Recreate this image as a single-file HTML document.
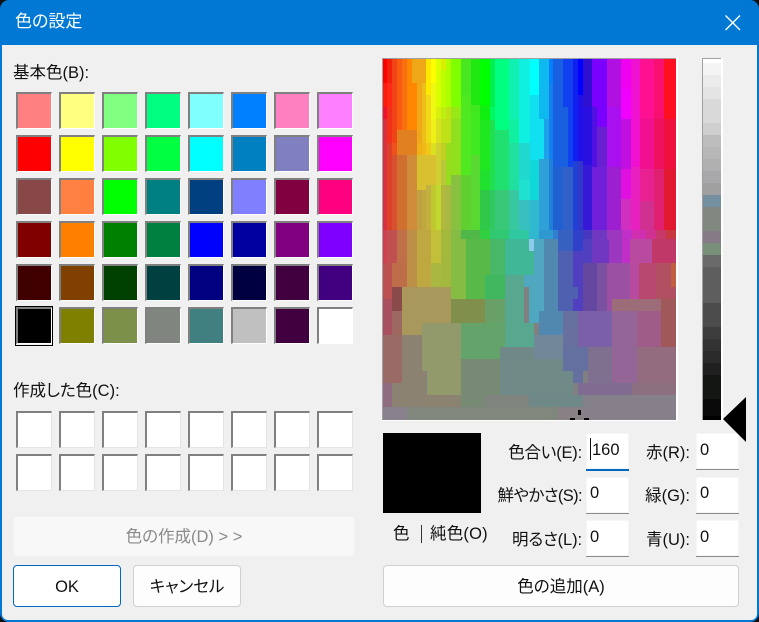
<!DOCTYPE html>
<html lang="ja"><head><meta charset="utf-8"><title>色の設定</title>
<style>
html,body{margin:0;padding:0;background:#111;}
body{width:759px;height:622px;position:relative;overflow:hidden;font-family:"Liberation Sans","Noto Sans CJK JP",sans-serif;font-size:16.5px;color:#111;font-feature-settings:"palt";}
#win{position:absolute;left:0;top:0;width:759px;height:622px;background:#0078d4;border-radius:9px;overflow:hidden;}
#body{position:absolute;left:2px;top:45px;width:755px;height:575px;background:#f0f0f0;border-radius:0 0 6px 6px;}
.t{position:absolute;white-space:nowrap;line-height:22px;}
.s{position:absolute;box-sizing:border-box;width:36px;height:37px;border-style:solid;border-width:2px 1px 1px 2px;border-color:#808080 #fff #fff #808080;}
.c{background:#fff;border-color:#808080 #e4e4e4 #e4e4e4 #808080;}
.in{position:absolute;box-sizing:border-box;width:43px;height:37px;background:#fff;border-bottom:1px solid #8a8a8a;box-shadow:0 0 0 1px #f6f6f6 inset;}
.b{position:absolute;box-sizing:border-box;background:#fdfdfd;border:1px solid #cfcfcf;border-radius:4px;text-align:center;line-height:42px;}
</style></head><body>
<div id="win"></div><div id="body"></div>
<div class="t" style="left:15px;top:11px;color:#fff;font-size:17px">色の設定</div>
<svg style="position:absolute;left:720px;top:10px" width="26" height="26"><path d="M5.5 5.5L20 20M20 5.5L5.5 20" stroke="#fff" stroke-width="1.4" fill="none"/></svg>

<div class="t" style="left:13px;top:62px">基本色(B):</div>
<div class="t" style="left:13px;top:380px">作成した色(C):</div>

<div class="s" style="left:16px;top:92px;background:#ff8080"></div><div class="s" style="left:59px;top:92px;background:#ffff80"></div><div class="s" style="left:102px;top:92px;background:#80ff80"></div><div class="s" style="left:145px;top:92px;background:#00ff80"></div><div class="s" style="left:188px;top:92px;background:#80ffff"></div><div class="s" style="left:231px;top:92px;background:#0080ff"></div><div class="s" style="left:274px;top:92px;background:#ff80c0"></div><div class="s" style="left:317px;top:92px;background:#ff80ff"></div>
<div class="s" style="left:16px;top:135px;background:#ff0000"></div><div class="s" style="left:59px;top:135px;background:#ffff00"></div><div class="s" style="left:102px;top:135px;background:#80ff00"></div><div class="s" style="left:145px;top:135px;background:#00ff40"></div><div class="s" style="left:188px;top:135px;background:#00ffff"></div><div class="s" style="left:231px;top:135px;background:#0080c0"></div><div class="s" style="left:274px;top:135px;background:#8080c0"></div><div class="s" style="left:317px;top:135px;background:#ff00ff"></div>
<div class="s" style="left:16px;top:178px;background:#884848"></div><div class="s" style="left:59px;top:178px;background:#ff8040"></div><div class="s" style="left:102px;top:178px;background:#00ff00"></div><div class="s" style="left:145px;top:178px;background:#008080"></div><div class="s" style="left:188px;top:178px;background:#004080"></div><div class="s" style="left:231px;top:178px;background:#8080ff"></div><div class="s" style="left:274px;top:178px;background:#800040"></div><div class="s" style="left:317px;top:178px;background:#ff0080"></div>
<div class="s" style="left:16px;top:221px;background:#800000"></div><div class="s" style="left:59px;top:221px;background:#ff8000"></div><div class="s" style="left:102px;top:221px;background:#008000"></div><div class="s" style="left:145px;top:221px;background:#008040"></div><div class="s" style="left:188px;top:221px;background:#0000ff"></div><div class="s" style="left:231px;top:221px;background:#0000a0"></div><div class="s" style="left:274px;top:221px;background:#800080"></div><div class="s" style="left:317px;top:221px;background:#8000ff"></div>
<div class="s" style="left:16px;top:264px;background:#400000"></div><div class="s" style="left:59px;top:264px;background:#804000"></div><div class="s" style="left:102px;top:264px;background:#004000"></div><div class="s" style="left:145px;top:264px;background:#004040"></div><div class="s" style="left:188px;top:264px;background:#000080"></div><div class="s" style="left:231px;top:264px;background:#000040"></div><div class="s" style="left:274px;top:264px;background:#400040"></div><div class="s" style="left:317px;top:264px;background:#400080"></div>
<div style="position:absolute;left:15px;top:306px;width:38px;height:40px;box-sizing:border-box;border:1px solid #000"></div>
<div class="s" style="left:16px;top:307px;background:#000"></div><div class="s" style="left:59px;top:307px;background:#808000"></div><div class="s" style="left:102px;top:307px;background:#7c904a"></div><div class="s" style="left:145px;top:307px;background:#808580"></div><div class="s" style="left:188px;top:307px;background:#408080"></div><div class="s" style="left:231px;top:307px;background:#c0c0c0"></div><div class="s" style="left:274px;top:307px;background:#400040"></div><div class="s" style="left:317px;top:307px;background:#fff"></div>

<div class="s c" style="left:16px;top:411px"></div><div class="s c" style="left:59px;top:411px"></div><div class="s c" style="left:102px;top:411px"></div><div class="s c" style="left:145px;top:411px"></div><div class="s c" style="left:188px;top:411px"></div><div class="s c" style="left:231px;top:411px"></div><div class="s c" style="left:274px;top:411px"></div><div class="s c" style="left:317px;top:411px"></div>
<div class="s c" style="left:16px;top:454px"></div><div class="s c" style="left:59px;top:454px"></div><div class="s c" style="left:102px;top:454px"></div><div class="s c" style="left:145px;top:454px"></div><div class="s c" style="left:188px;top:454px"></div><div class="s c" style="left:231px;top:454px"></div><div class="s c" style="left:274px;top:454px"></div><div class="s c" style="left:317px;top:454px"></div>

<div class="b" style="left:13px;top:516px;width:342px;height:41px;line-height:41px;background:#f8f8f8;border-color:#f2f2f2;border-radius:5px;color:#8a8a8a">色の作成(D) &gt; &gt;</div>
<div class="b" style="left:13px;top:565px;width:108px;height:42px;border-color:#0067c0;background:#fff">OK</div>
<div class="b" style="left:133px;top:565px;width:108px;height:42px">キャンセル</div>
<div class="b" style="left:383px;top:565px;width:356px;height:42px">色の追加(A)</div>

<!-- spectrum frame -->
<div style="position:absolute;left:382px;top:58px;width:295px;height:363px;background:#a0a0a0"></div>
<div style="position:absolute;left:676px;top:58px;width:2px;height:363px;background:#fff"></div>
<div style="position:absolute;left:382px;top:420px;width:296px;height:1px;background:#fff"></div>
<svg style="position:absolute;left:0;top:0" width="759" height="622" shape-rendering="crispEdges">
<rect x="383" y="59" width="293" height="361" fill="#808080"/>
<!-- upper columns y 59-230 -->
<path fill="#ff0000" d="M383 59h4v24h-4z"/><path fill="#ff1a10" d="M383 83h4v24h-4z"/><path fill="#f01030" d="M383 107h4v12h-4z"/><path fill="#d83040" d="M383 119h4v111h-4z"/>
<path fill="#f0200c" d="M387 59h5v24h-5z"/><path fill="#ff2814" d="M387 83h5v24h-5z"/><path fill="#f03018" d="M387 107h5v36h-5z"/><path fill="#dc4028" d="M387 143h5v87h-5z"/>
<path fill="#f04418" d="M392 59h5v84h-5z"/><path fill="#f0501c" d="M392 143h5v12h-5z"/><path fill="#d85030" d="M392 155h5v75h-5z"/>
<path fill="#f85c10" d="M397 59h5v71h-5z"/><path fill="#e08020" d="M397 130h5v25h-5z"/><path fill="#cf7030" d="M397 155h5v75h-5z"/>
<path fill="#f87010" d="M402 59h5v71h-5z"/><path fill="#e08020" d="M402 130h5v25h-5z"/><path fill="#cf7030" d="M402 155h5v75h-5z"/>
<path fill="#ff8800" d="M407 59h5v71h-5z"/><path fill="#e08020" d="M407 130h5v25h-5z"/><path fill="#d08c38" d="M407 155h5v75h-5z"/>
<path fill="#eca818" d="M412 59h5v24h-5z"/><path fill="#ff8800" d="M412 83h5v47h-5z"/><path fill="#e08020" d="M412 130h5v25h-5z"/><path fill="#d08c38" d="M412 155h5v75h-5z"/>
<path fill="#f0a818" d="M417 59h5v84h-5z"/><path fill="#f0b018" d="M417 143h5v12h-5z"/><path fill="#d8c030" d="M417 155h5v35h-5z"/><path fill="#c0a040" d="M417 190h5v40h-5z"/>
<path fill="#eca818" d="M422 59h4v24h-4z"/><path fill="#ecc018" d="M422 83h4v60h-4z"/><path fill="#f0b818" d="M422 143h4v12h-4z"/><path fill="#d8c030" d="M422 155h4v35h-4z"/><path fill="#c0a840" d="M422 190h4v40h-4z"/>
<path fill="#ffe800" d="M426 59h5v36h-5z"/><path fill="#f0d818" d="M426 95h5v48h-5z"/><path fill="#f0c818" d="M426 143h5v12h-5z"/><path fill="#d8c030" d="M426 155h5v30h-5z"/><path fill="#c4b040" d="M426 185h5v45h-5z"/>
<path fill="#ffff00" d="M431 59h5v24h-5z"/><path fill="#eff810" d="M431 83h5v37h-5z"/><path fill="#eff018" d="M431 120h5v23h-5z"/><path fill="#d8e020" d="M431 143h5v12h-5z"/><path fill="#d8c030" d="M431 155h5v30h-5z"/><path fill="#c0c830" d="M431 185h5v45h-5z"/>
<path fill="#dcff00" d="M436 59h5v48h-5z"/><path fill="#d8f010" d="M436 107h5v12h-5z"/><path fill="#d8e020" d="M436 119h5v24h-5z"/><path fill="#d0d030" d="M436 143h5v42h-5z"/><path fill="#c0d830" d="M436 185h5v45h-5z"/>
<path fill="#d8f000" d="M441 59h5v11h-5z"/><path fill="#bcff00" d="M441 70h5v37h-5z"/><path fill="#bcf010" d="M441 107h5v12h-5z"/><path fill="#c0e018" d="M441 119h5v24h-5z"/><path fill="#c0d020" d="M441 143h5v17h-5z"/><path fill="#b8c838" d="M441 160h5v25h-5z"/><path fill="#b0b840" d="M441 185h5v45h-5z"/>
<path fill="#b0ff00" d="M446 59h5v48h-5z"/><path fill="#c0e018" d="M446 107h5v36h-5z"/><path fill="#98dc20" d="M446 143h5v42h-5z"/><path fill="#a8b840" d="M446 185h5v45h-5z"/>
<path fill="#80ff00" d="M451 59h10v48h-10z"/><path fill="#98e818" d="M451 107h10v12h-10z"/><path fill="#90e020" d="M451 119h10v56h-10z"/><path fill="#88c040" d="M451 175h10v55h-10z"/>
<path fill="#48e820" d="M461 59h10v36h-10z"/><path fill="#50e820" d="M461 95h10v80h-10z"/><path fill="#60d030" d="M461 175h10v55h-10z"/>
<path fill="#20e810" d="M471 59h9v46h-9z"/><path fill="#40e820" d="M471 105h9v50h-9z"/><path fill="#58d830" d="M471 155h9v75h-9z"/>
<path fill="#00ff00" d="M480 59h10v46h-10z"/><path fill="#10f010" d="M480 105h10v15h-10z"/><path fill="#20e820" d="M480 120h10v50h-10z"/><path fill="#20e030" d="M480 170h10v20h-10z"/><path fill="#30c848" d="M480 190h10v40h-10z"/>
<path fill="#00f050" d="M490 59h5v48h-5z"/><path fill="#00ff80" d="M495 59h14v48h-14z"/><path fill="#00f860" d="M490 107h5v13h-5z"/><path fill="#20e050" d="M490 120h5v70h-5z"/><path fill="#30c860" d="M490 190h5v40h-5z"/>
<path fill="#00ff80" d="M495 107h14v23h-14z"/><path fill="#20e070" d="M495 130h14v60h-14z"/><path fill="#38c878" d="M495 190h14v40h-14z"/>
<path fill="#10f0b0" d="M509 59h10v60h-10z"/><path fill="#10f0a0" d="M509 119h10v24h-10z"/><path fill="#20e0a0" d="M509 143h10v47h-10z"/><path fill="#38c8a0" d="M509 190h10v40h-10z"/>
<path fill="#10f0e0" d="M519 59h11v84h-11z"/><path fill="#20d8d0" d="M519 143h11v47h-11z"/><path fill="#20e0d0" d="M519 180h11v20h-11z"/><path fill="#38c0c0" d="M519 200h11v30h-11z"/>
<path fill="#00ffff" d="M530 59h9v36h-9z"/><path fill="#10e0f0" d="M530 95h9v65h-9z"/><path fill="#10d8d8" d="M530 160h9v40h-9z"/><path fill="#30b8d0" d="M530 200h9v30h-9z"/>
<path fill="#10b8f0" d="M539 59h10v60h-10z"/><path fill="#10e0f0" d="M539 119h5v40h-5z"/><path fill="#20a0e8" d="M544 119h5v40h-5z"/><path fill="#30a0d8" d="M539 159h10v71h-10z"/>
<path fill="#0080ff" d="M549 59h4v24h-4z"/><path fill="#1480f0" d="M549 83h4v76h-4z"/><path fill="#2080d8" d="M549 159h4v71h-4z"/>
<path fill="#1860e0" d="M553 59h10v108h-10z"/><path fill="#2060d0" d="M553 167h10v63h-10z"/>
<path fill="#1040f0" d="M563 59h10v48h-10z"/><path fill="#1860e0" d="M563 107h5v60h-5z"/><path fill="#1040f0" d="M568 107h5v60h-5z"/><path fill="#3060c8" d="M563 167h10v63h-10z"/>
<path fill="#1020f0" d="M573 59h5v102h-5z"/><path fill="#2040d8" d="M573 161h5v69h-5z"/>
<path fill="#0000ff" d="M578 59h5v36h-5z"/><path fill="#2010e8" d="M578 95h5v66h-5z"/><path fill="#3038c8" d="M578 161h5v69h-5z"/>
<path fill="#3010d0" d="M583 59h9v48h-9z"/><path fill="#2a10e0" d="M583 107h9v58h-9z"/><path fill="#3818d8" d="M583 165h9v65h-9z"/>
<path fill="#7a00ff" d="M592 59h15v48h-15z"/><path fill="#5010e0" d="M592 107h5v60h-5z"/><path fill="#7a00ff" d="M597 107h10v20h-10z"/><path fill="#6820d0" d="M597 127h10v40h-10z"/><path fill="#7020d8" d="M592 167h15v63h-15z"/>
<path fill="#b010e0" d="M607 59h14v48h-14z"/><path fill="#a810f0" d="M607 107h14v60h-14z"/><path fill="#9c20d0" d="M607 167h14v63h-14z"/>
<path fill="#f000f0" d="M621 59h10v30h-10z"/><path fill="#f000ff" d="M621 89h10v30h-10z"/><path fill="#c010e0" d="M621 119h10v50h-10z"/><path fill="#e010e0" d="M621 169h10v30h-10z"/><path fill="#d030c0" d="M621 199h10v31h-10z"/>
<path fill="#f010d0" d="M631 59h9v108h-9z"/><path fill="#e820c0" d="M631 167h9v63h-9z"/>
<path fill="#ff1090" d="M640 59h14v60h-14z"/><path fill="#f01090" d="M640 119h14v50h-14z"/><path fill="#e82090" d="M640 169h14v32h-14z"/><path fill="#d03090" d="M640 201h14v29h-14z"/>
<path fill="#f81070" d="M654 59h10v60h-10z"/><path fill="#f01060" d="M654 119h10v50h-10z"/><path fill="#e02070" d="M654 169h10v61h-10z"/>
<path fill="#ff1020" d="M664 59h12v60h-12z"/><path fill="#f01040" d="M664 119h12v50h-12z"/><path fill="#e01830" d="M664 169h12v61h-12z"/>
<!-- y 230-420 -->
<path fill="#d04050" d="M383 230h4v33h-4z"/><path fill="#c05050" d="M387 230h10v33h-10z"/><path fill="#c07048" d="M397 230h10v33h-10z"/>
<path fill="#bd5050" d="M383 263h9v36h-9z"/><path fill="#bd6e48" d="M392 263h15v24h-15z"/>
<path fill="#bd9048" d="M407 230h10v57h-10z"/><path fill="#c0a840" d="M417 230h14v69h-14z"/><path fill="#c2c038" d="M431 230h10v33h-10z"/><path fill="#a8b840" d="M431 263h10v36h-10z"/>
<path fill="#a4b83e" d="M441 230h10v69h-10z"/><path fill="#84bc44" d="M451 230h15v69h-15z"/><path fill="#58b848" d="M466 239h24v60h-24z"/>
<path fill="#48b868" d="M490 239h15v36h-15z"/><path fill="#40b860" d="M485 275h20v24h-20z"/>
<path fill="#40b898" d="M505 239h29v36h-29z"/><path fill="#50a8c0" d="M534 239h10v72h-10z"/><path fill="#50a8c0" d="M524 275h15v12h-15z"/><path fill="#50a8c0" d="M529 287h10v36h-10z"/>
<path fill="#5088b0" d="M544 239h14v33h-14z"/><path fill="#5088b0" d="M539 311h24v24h-24z"/><path fill="#5088b0" d="M544 272h19v39h-19z"/>
<path fill="#3860c0" d="M558 230h15v21h-15z"/><path fill="#5060b0" d="M558 251h15v60h-15z"/><path fill="#3040c8" d="M573 230h10v21h-10z"/><path fill="#5040c0" d="M573 251h20v36h-20z"/><path fill="#5060b0" d="M573 287h5v12h-5z"/><path fill="#5040c0" d="M578 287h15v12h-15z"/><path fill="#5040c0" d="M573 299h10v12h-10z"/><path fill="#5040c0" d="M583 239h9v24h-9z"/>
<path fill="#7038c0" d="M592 239h17v24h-17z"/><path fill="#6448a0" d="M583 263h17v48h-17z"/><path fill="#7a50a0" d="M597 263h13v48h-13z"/>
<path fill="#9c38c0" d="M609 239h13v24h-13z"/><path fill="#c030c8" d="M622 239h8v24h-8z"/><path fill="#9c50a4" d="M607 263h32v48h-32z"/>
<path fill="#b84aa0" d="M630 239h22v60h-22z"/><path fill="#c03868" d="M652 239h24v24h-24z"/><path fill="#b05060" d="M656 263h20v36h-20z"/><path fill="#c06040" d="M671 263h5v24h-5z"/><path fill="#b84870" d="M639 263h17v36h-17z"/>
<!-- top strip -->
<path fill="#50b848" d="M461 230h19v9h-19z"/><path fill="#30d040" d="M480 230h10v9h-10z"/><path fill="#30c870" d="M490 230h19v9h-19z"/><path fill="#30c8a0" d="M509 230h20v9h-20z"/><path fill="#30b8d0" d="M529 230h10v9h-10z"/><path fill="#3098d0" d="M539 230h14v9h-14z"/><path fill="#3080d0" d="M553 230h5v9h-5z"/><path fill="#4838c0" d="M583 230h9v9h-9z"/><path fill="#7038c0" d="M592 230h15v9h-15z"/><path fill="#9c38c0" d="M607 230h15v9h-15z"/><path fill="#c030c8" d="M622 230h10v9h-10z"/><path fill="#d030b0" d="M632 230h14v9h-14z"/><path fill="#d03090" d="M646 230h10v9h-10z"/><path fill="#c83868" d="M656 230h10v9h-10z"/><path fill="#c83840" d="M666 230h10v9h-10z"/>
<path fill="#8ccbee" d="M529 239h5v12h-5z"/>
<!-- y 287+ -->
<path fill="#a85060" d="M383 299h9v36h-9z"/><path fill="#8a4a4a" d="M392 287h10v24h-10z"/><path fill="#9c6860" d="M392 311h10v24h-10z"/><path fill="#9a6a66" d="M383 335h19v48h-19z"/><path fill="#906c80" d="M383 383h9v24h-9z"/>
<path fill="#a8985c" d="M402 287h25v48h-25z"/><path fill="#a8985c" d="M427 287h24v36h-24z"/><path fill="#80904c" d="M451 299h34v24h-34z"/><path fill="#68a068" d="M485 299h20v48h-20z"/>
<path fill="#58a890" d="M505 275h19v72h-19z"/><path fill="#58a890" d="M524 323h10v24h-10z"/>
<path fill="#8c8272" d="M392 383h34v24h-34z"/><path fill="#8c8272" d="M402 335h24v48h-24z"/><path fill="#929a6c" d="M422 323h39v48h-39z"/><path fill="#929a6c" d="M427 371h34v24h-34z"/><path fill="#8c8272" d="M426 395h35v12h-35z"/>
<path fill="#64a46a" d="M461 323h44v36h-44z"/><path fill="#768a74" d="M461 359h39v48h-39z"/>
<path fill="#708888" d="M500 347h34v48h-34z"/><path fill="#708898" d="M534 335h29v24h-29z"/><path fill="#708a88" d="M500 359h73v36h-73z"/>
<path fill="#6870a0" d="M563 311h15v36h-15z"/><path fill="#6470a0" d="M563 347h25v24h-25z"/><path fill="#6470a0" d="M573 371h10v12h-10z"/>
<path fill="#7a60a8" d="M578 311h34v36h-34z"/><path fill="#807090" d="M588 347h24v36h-24z"/><path fill="#946698" d="M612 323h25v60h-25z"/>
<path fill="#a05c88" d="M637 311h24v36h-24z"/><path fill="#a05858" d="M661 299h15v48h-15z"/><path fill="#946c80" d="M637 347h39v36h-39z"/><path fill="#9c6c78" d="M612 299h49v12h-49z"/><path fill="#946698" d="M612 311h25v12h-25z"/>
<path fill="#806c90" d="M578 383h54v12h-54z"/><path fill="#8c7080" d="M632 383h44v12h-44z"/>
<path fill="#808580" d="M485 395h44v12h-44z"/><path fill="#6f8888" d="M529 395h54v12h-54z"/><path fill="#85808a" d="M583 395h93v25h-93z"/>
<path fill="#88808c" d="M383 407h24v13h-24z"/><path fill="#80887e" d="M407 407h151v13h-151z"/><path fill="#888085" d="M558 407h25v13h-25z"/>
<!-- cursor -->
<rect x="578" y="410" width="3" height="5" fill="#000"/><rect x="570" y="418" width="5" height="2" fill="#000"/><rect x="584" y="418" width="5" height="2" fill="#000"/>
<!-- luminance bar -->
<rect x="702" y="58" width="1" height="362" fill="#a0a0a0"/><rect x="703" y="58" width="18" height="1" fill="#a0a0a0"/><rect x="721" y="58" width="2" height="363" fill="#fff"/>
<rect x="703" y="59" width="18" height="4" fill="#fff"/><rect x="703" y="63" width="18" height="12" fill="#f4f4f4"/><rect x="703" y="75" width="18" height="12" fill="#ebebeb"/><rect x="703" y="87" width="18" height="12" fill="#e4e4e4"/><rect x="703" y="99" width="18" height="24" fill="#d9d9d9"/><rect x="703" y="123" width="18" height="12" fill="#cfcfcf"/><rect x="703" y="135" width="18" height="12" fill="#bdbdbd"/><rect x="703" y="147" width="18" height="12" fill="#b7b7b7"/><rect x="703" y="159" width="18" height="12" fill="#b0b0b0"/><rect x="703" y="171" width="18" height="12" fill="#a8a8aa"/><rect x="703" y="183" width="18" height="12" fill="#a0a0a0"/><rect x="703" y="195" width="18" height="12" fill="#7490a0"/><rect x="703" y="207" width="18" height="24" fill="#808880"/><rect x="703" y="231" width="18" height="12" fill="#857a85"/><rect x="703" y="243" width="18" height="12" fill="#78907a"/><rect x="703" y="255" width="18" height="12" fill="#6a6a6a"/><rect x="703" y="267" width="18" height="36" fill="#5e5e5e"/><rect x="703" y="303" width="18" height="24" fill="#4c4c4c"/><rect x="703" y="327" width="18" height="12" fill="#3c3c3c"/><rect x="703" y="339" width="18" height="12" fill="#333"/><rect x="703" y="351" width="18" height="12" fill="#2a2a2a"/><rect x="703" y="363" width="18" height="12" fill="#202020"/><rect x="703" y="375" width="18" height="24" fill="#141614"/><rect x="703" y="399" width="18" height="17" fill="#0a0a0a"/><rect x="703" y="416" width="18" height="4" fill="#000"/>
</svg>

<!-- preview -->
<div style="position:absolute;left:383px;top:433px;width:98px;height:80px;background:#000"></div>
<div class="t" style="left:393px;top:523px">色</div>
<div style="position:absolute;left:421px;top:525px;width:1px;height:18px;background:#333"></div>
<div class="t" style="left:430px;top:523px;letter-spacing:.2px">純色(O)</div>

<div class="t" style="right:177px;top:442px;letter-spacing:-.2px">色合い(E):</div>
<div class="t" style="right:177px;top:485px;letter-spacing:-.6px">鮮やかさ(S):</div>
<div class="t" style="right:177px;top:529px;letter-spacing:-.1px">明るさ(L):</div>
<div class="t" style="right:69px;top:442px">赤(R):</div>
<div class="t" style="right:69px;top:485px">緑(G):</div>
<div class="t" style="right:69px;top:529px">青(U):</div>

<div class="in" style="left:586px;top:433px;height:38px;border-bottom:2px solid #0067c0"></div>
<div class="in" style="left:586px;top:477px"></div>
<div class="in" style="left:586px;top:520px"></div>
<div class="in" style="left:696px;top:433px"></div>
<div class="in" style="left:696px;top:477px"></div>
<div class="in" style="left:696px;top:520px"></div>
<div style="position:absolute;left:590px;top:438px;width:1px;height:22px;background:#111"></div>
<div class="t" style="left:592px;top:439px">160</div>
<div class="t" style="left:590px;top:482px">0</div>
<div class="t" style="left:590px;top:526px">0</div>
<div class="t" style="left:700px;top:439px">0</div>
<div class="t" style="left:700px;top:482px">0</div>
<div class="t" style="left:700px;top:526px">0</div>

<svg style="position:absolute;left:720px;top:395px" width="30" height="50"><polygon points="3,24 26,2 26,47" fill="#000"/></svg>
</body></html>
